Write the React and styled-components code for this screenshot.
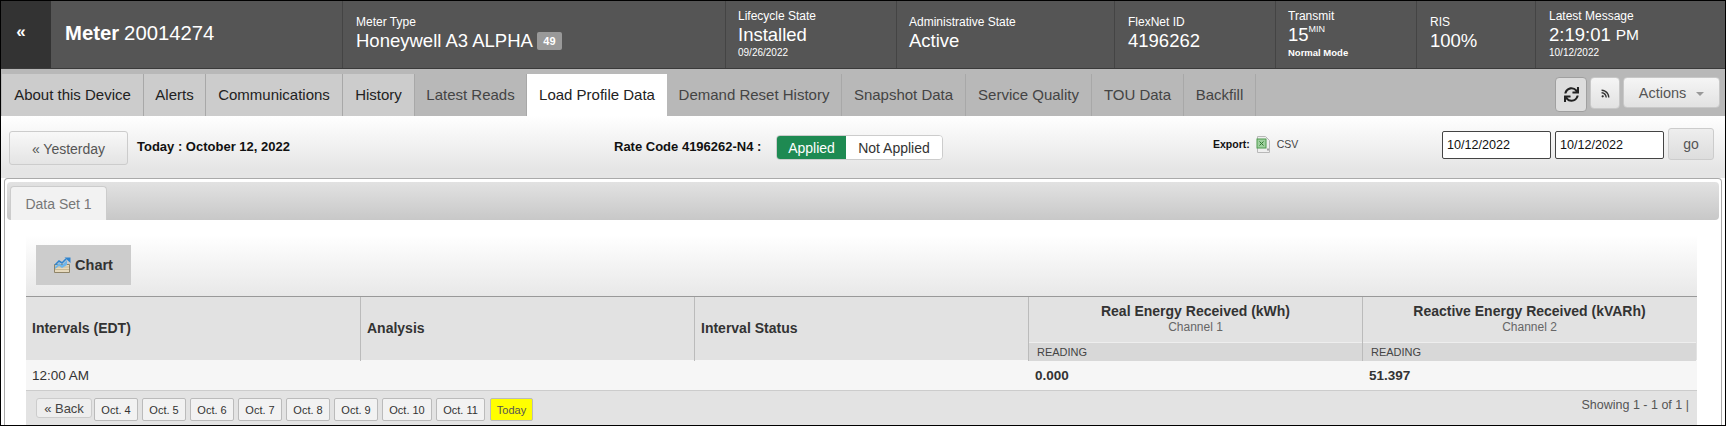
import React from "react";
import styled, { createGlobalStyle } from "styled-components";
import { FaSync, FaRss } from "react-icons/fa";

const GlobalStyle = createGlobalStyle`
  html, body {
    margin: 0;
    padding: 0;
    overflow: hidden;
    background: #fff;
    font-family: "Liberation Sans", Arial, sans-serif;
  }
  * { box-sizing: border-box; }
`;

const Page = styled.div`
  width: 1726px;
  height: 426px;
  border: 1px solid #000;
  overflow: hidden;
  display: flex;
  flex-direction: column;
  background: #fff;
`;

const MeterBar = styled.div`
  height: 68px;
  flex: none;
  display: flex;
  background: #555;
  color: #fff;
  border-bottom: 1px solid #3a3a3a;
`;

const BackCell = styled.div`
  width: 50px;
  background: #333;
  display: flex;
  align-items: center;
  justify-content: center;
  font-weight: bold;
  font-size: 17px;
  padding-bottom: 5px;
  padding-right: 10px;
`;

const TitleCell = styled.div`
  width: 292px;
  display: flex;
  align-items: center;
  padding: 0 0 3px 14px;
  font-size: 20.3px;
  border-right: 1px solid #444;
  b { margin-right: 5px; }
`;

const InfoCell = styled.div`
  width: ${(p) => p.$w}px;
  display: flex;
  flex-direction: column;
  justify-content: center;
  padding: 0 0 ${(p) => (p.$tall ? 2 : 0)}px ${(p) => p.$pad || 12}px;
  border-right: ${(p) => (p.$last ? "none" : "1px solid #444")};
  flex: ${(p) => (p.$last ? 1 : "none")};
`;

const InfoLabel = styled.div`
  font-size: 12px;
  line-height: 13px;
`;

const InfoValue = styled.div`
  font-size: 18.5px;
  line-height: 24px;
  display: flex;
  align-items: center;
  sup { font-size: 9px; line-height: 9px; align-self: flex-start; margin-top: 2px; }
  small { font-size: 15.5px; margin-left: 5px; }
`;

const InfoNote = styled.div`
  font-size: ${(p) => (p.$bold ? 9.5 : 10)}px;
  line-height: 11px;
  font-weight: ${(p) => (p.$bold ? "bold" : "normal")};
`;

const Badge = styled.span`
  background: #999;
  border-radius: 2px;
  font-size: 11px;
  font-weight: bold;
  width: 25px;
  height: 18px;
  margin-left: 4px;
  display: inline-flex;
  align-items: center;
  justify-content: center;
`;

const TabBar = styled.div`
  height: 47px;
  flex: none;
  background: #b8b8b8;
  display: flex;
  align-items: flex-end;
  padding-left: 1px;
`;

const Tab = styled.div`
  width: ${(p) => p.$w}px;
  height: 42px;
  padding-bottom: 1px;
  display: flex;
  align-items: center;
  justify-content: center;
  font-size: 15px;
  border-right: ${(p) => (p.$active ? "none" : "1px solid #a8a8a8")};
  background: ${(p) => (p.$active ? "#fff" : p.$primary ? "#ccc" : "#b8b8b8")};
  color: ${(p) => (p.$active || p.$primary ? "#222" : "#444")};
`;

const TabActions = styled.div`
  margin-left: auto;
  display: flex;
  align-self: flex-start;
  gap: 3px;
  padding: 8px 5px 0 0;
`;

const IconButton = styled.div`
  width: ${(p) => p.$w}px;
  height: ${(p) => p.$h}px;
  display: flex;
  align-items: center;
  justify-content: center;
  gap: 10px;
  border-radius: 4px;
  border: 1px solid ${(p) => (p.$pressed ? "#a0a0a0" : "#c8c8c8")};
  background: ${(p) => (p.$pressed ? "#ddd" : "linear-gradient(#f5f5f5, #e2e2e2)")};
  color: #555;
  font-size: 14.5px;
`;

const Caret = styled.span`
  border-top: 4px solid #999;
  border-left: 4px solid transparent;
  border-right: 4px solid transparent;
  margin-top: 2px;
`;

const ToolRow = styled.div`
  height: 62px;
  flex: none;
  background: linear-gradient(#fff 0, #e5e5e5 54px);
  display: flex;
  padding: 15px 10px 0 8px;
  font-size: 13px;
  color: #111;
`;

const YesterdayButton = styled.div`
  width: 119px;
  height: 34px;
  padding-top: 1px;
  border: 1px solid #ccc;
  border-radius: 3px;
  background: linear-gradient(#f8f8f8, #e4e4e4);
  color: #555;
  font-size: 14px;
  display: flex;
  align-items: center;
  justify-content: center;
`;

const TodayLabel = styled.div`
  width: 477px;
  margin-left: 9px;
  font-weight: bold;
  line-height: 32px;
`;

const RateLabel = styled.div`
  width: 162px;
  font-weight: bold;
  line-height: 32px;
`;

const Toggle = styled.div`
  display: flex;
  height: 25px;
  margin-top: 4px;
  border: 1px solid #ccc;
  border-radius: 4px;
  overflow: hidden;
  font-size: 14px;
`;

const ToggleOption = styled.div`
  width: ${(p) => p.$w}px;
  display: flex;
  align-items: center;
  justify-content: center;
  background: ${(p) => (p.$on ? "#1e8a52" : "#fff")};
  color: ${(p) => (p.$on ? "#fff" : "#333")};
`;

const ExportGroup = styled.div`
  width: 229px;
  margin-left: 270px;
  height: 26px;
  display: flex;
  align-items: center;
  font-size: 10.5px;
  b { margin-right: 6px; }
  span { margin-left: 6px; color: #444; }
`;

const DateInput = styled.div`
  width: 109px;
  height: 28px;
  border: 1px solid #444;
  border-radius: 2px;
  background: #fff;
  font-size: 12.6px;
  line-height: 26px;
  padding-left: 4px;
  margin-right: 4px;
`;

const GoButton = styled.div`
  width: 46px;
  height: 32px;
  margin-top: -3px;
  border: 1px solid #ccc;
  border-radius: 3px;
  background: linear-gradient(#eee, #ddd);
  color: #555;
  font-size: 14px;
  display: flex;
  align-items: center;
  justify-content: center;
`;

const Panel = styled.div`
  flex: 1;
  margin: 0 3px;
  border: 1px solid #aaa;
  border-bottom: none;
  border-radius: 4px 4px 0 0;
  padding: 3px 2px 0;
  background: #fff;
  min-height: 0;
`;

const PanelTabs = styled.div`
  height: 38px;
  border-radius: 4px;
  background: linear-gradient(#e2e2e2, #c8c8c8);
  padding: 4px 0 0 3px;
`;

const PanelTab = styled.div`
  width: 97px;
  height: 34px;
  border: 1px solid #ccc;
  border-bottom: none;
  border-radius: 4px 4px 0 0;
  background: #f2f2f2;
  color: #777;
  font-size: 14px;
  display: flex;
  align-items: center;
  justify-content: center;
`;

const PanelBody = styled.div`
  padding: 15px 22px 0 19px;
`;

const ChartRow = styled.div`
  height: 61px;
  background: linear-gradient(#fff, #e8e8e8);
  padding-top: 10px;
  padding-left: 10px;
`;

const ChartButton = styled.div`
  width: 95px;
  height: 40px;
  background: #ccc;
  color: #333;
  font-weight: bold;
  font-size: 14.5px;
  display: flex;
  align-items: center;
  justify-content: center;
  gap: 4px;
`;

const HeaderRow = styled.div`
  height: 64px;
  border-top: 1px solid #999;
  display: grid;
  grid-template-columns: 335px 334px 334px 334px 333px;
  background: #e2e2e2;
`;

const HeadCell = styled.div`
  display: flex;
  align-items: center;
  padding: 0 6px 2px;
  font-weight: bold;
  font-size: 14px;
  color: #333;
  border-right: 1px solid #bbb;
`;

const GroupCell = styled.div`
  display: flex;
  flex-direction: column;
  border-right: 1px solid #bbb;
  &:last-child { border-right: none; }
`;

const GroupTitle = styled.div`
  height: 45px;
  text-align: center;
  font-size: 14px;
  font-weight: bold;
  color: #333;
  padding-top: 5px;
  line-height: 18px;
  small { display: block; font-weight: normal; font-size: 12px; line-height: 15px; color: #666; }
`;

const GroupSub = styled.div`
  flex: 1;
  background: #d8d8d8;
  border-top: 1px solid #eee;
  font-size: 11px;
  color: #444;
  padding-left: 8px;
  line-height: 18px;
`;

const DataRow = styled.div`
  height: 31px;
  display: grid;
  grid-template-columns: 335px 334px 334px 334px 333px;
  background: #f6f6f6;
  border-bottom: 1px solid #ccc;
  align-items: center;
  font-size: 13.5px;
  color: #333;
`;

const DataCell = styled.div`
  padding-left: 6px;
  font-weight: ${(p) => (p.$bold ? "bold" : "normal")};
`;

const Pager = styled.div`
  height: 34px;
  background: #e3e3e3;
  display: flex;
  align-items: flex-start;
  padding: 7px 8px 0 10px;
  gap: 4px;
`;

const PagerBack = styled.div`
  width: 56px;
  height: 20px;
  margin-right: -2px;
  border: 1px solid #ccc;
  border-radius: 3px;
  background: #eee;
  color: #444;
  font-size: 13px;
  display: flex;
  align-items: center;
  justify-content: center;
`;

const DayButton = styled.div`
  width: ${(p) => p.$w}px;
  height: 23px;
  margin-left: ${(p) => (p.$today ? 1 : 0)}px;
  border: 1px solid #bbb;
  border-radius: 2px;
  background: ${(p) => (p.$today ? "#ff0" : "#f2f2f2")};
  color: ${(p) => (p.$today ? "#555" : "#333")};
  font-size: 11px;
  display: flex;
  align-items: center;
  justify-content: center;
`;

const Showing = styled.div`
  margin-left: auto;
  font-size: 12.5px;
  color: #555;
`;

const CsvIcon = () => (
  <svg width="15" height="17" viewBox="0 0 15 17">
    <path d="M1.5.5h8l4 4v12h-12z" fill="#efefef" stroke="#b8b8b8" />
    <rect x="1" y="3" width="9" height="9" fill="#9fd09f" stroke="#4f9a4f" />
    <path d="M3.5 5.5l4 4M7.5 5.5l-4 4" stroke="#2f7a2f" />
    <path d="M12 12.5v2" stroke="#555" />
  </svg>
);

const ChartIcon = () => (
  <svg width="17" height="16" viewBox="0 0 17 16">
    <path d="M.5 7.5h15v8H.5z" fill="#e6d9bd" stroke="#8f8468" />
    <path d="M1 12.5h14M1 10h14" stroke="#c9b994" />
    <path d="M1 10l4-4 3 2 5-5v5l-5 3-3-2-4 3z" fill="#6db5ea" />
    <path d="M1 8l4-4 3 2 4-4" fill="none" stroke="#2e84cf" strokeWidth="1.6" />
    <path d="M10.500 .5h6v5.500z" fill="#2e84cf" />
  </svg>
);

const mainTabs = [
  ["About this Device", 142, true],
  ["Alerts", 62, true],
  ["Communications", 137, true],
  ["History", 72, true],
  ["Latest Reads", 112],
  ["Load Profile Data", 140, false, true],
  ["Demand Reset History", 175],
  ["Snapshot Data", 124],
  ["Service Quality", 126],
  ["TOU Data", 92],
  ["Backfill", 72],
];

const days = [
  ["Oct. 4", 44],
  ["Oct. 5", 44],
  ["Oct. 6", 44],
  ["Oct. 7", 44],
  ["Oct. 8", 44],
  ["Oct. 9", 44],
  ["Oct. 10", 50],
  ["Oct. 11", 49],
];

const App = () => (
  <Page>
    <GlobalStyle />
    <MeterBar>
      <BackCell>«</BackCell>
      <TitleCell>
        <b>Meter</b> 20014274
      </TitleCell>
      <InfoCell $w={383} $pad={13}>
        <InfoLabel>Meter Type</InfoLabel>
        <InfoValue>
          Honeywell A3 ALPHA<Badge>49</Badge>
        </InfoValue>
      </InfoCell>
      <InfoCell $w={171} $pad={12} $tall>
        <InfoLabel>Lifecycle State</InfoLabel>
        <InfoValue>Installed</InfoValue>
        <InfoNote>09/26/2022</InfoNote>
      </InfoCell>
      <InfoCell $w={218} $pad={12}>
        <InfoLabel>Administrative State</InfoLabel>
        <InfoValue>Active</InfoValue>
      </InfoCell>
      <InfoCell $w={161} $pad={13}>
        <InfoLabel>FlexNet ID</InfoLabel>
        <InfoValue>4196262</InfoValue>
      </InfoCell>
      <InfoCell $w={141} $pad={12} $tall>
        <InfoLabel>Transmit</InfoLabel>
        <InfoValue>
          15<sup>MIN</sup>
        </InfoValue>
        <InfoNote $bold>Normal Mode</InfoNote>
      </InfoCell>
      <InfoCell $w={119} $pad={13}>
        <InfoLabel>RIS</InfoLabel>
        <InfoValue>100%</InfoValue>
      </InfoCell>
      <InfoCell $last $pad={13} $tall>
        <InfoLabel>Latest Message</InfoLabel>
        <InfoValue>
          2:19:01<small>PM</small>
        </InfoValue>
        <InfoNote>10/12/2022</InfoNote>
      </InfoCell>
    </MeterBar>

    <TabBar>
      {mainTabs.map(([label, w, primary, active]) => (
        <Tab key={label} $w={w} $primary={primary} $active={active}>
          {label}
        </Tab>
      ))}
      <TabActions>
        <IconButton $w={32} $h={35} $pressed>
          <FaSync size={15} color="#222" />
        </IconButton>
        <IconButton $w={30} $h={32}>
          <FaRss size={9} color="#333" />
        </IconButton>
        <IconButton $w={97} $h={31}>
          Actions <Caret />
        </IconButton>
      </TabActions>
    </TabBar>

    <ToolRow>
      <YesterdayButton>« Yesterday</YesterdayButton>
      <TodayLabel>Today : October 12, 2022</TodayLabel>
      <RateLabel>Rate Code 4196262-N4 :</RateLabel>
      <Toggle>
        <ToggleOption $on $w={69}>Applied</ToggleOption>
        <ToggleOption $w={96}>Not Applied</ToggleOption>
      </Toggle>
      <ExportGroup>
        <b>Export:</b> <CsvIcon /> <span>CSV</span>
      </ExportGroup>
      <DateInput>10/12/2022</DateInput>
      <DateInput>10/12/2022</DateInput>
      <GoButton>go</GoButton>
    </ToolRow>

    <Panel>
      <PanelTabs>
        <PanelTab>Data Set 1</PanelTab>
      </PanelTabs>
      <PanelBody>
        <ChartRow>
          <ChartButton>
            <ChartIcon /> Chart
          </ChartButton>
        </ChartRow>
        <HeaderRow>
          <HeadCell>Intervals (EDT)</HeadCell>
          <HeadCell>Analysis</HeadCell>
          <HeadCell>Interval Status</HeadCell>
          <GroupCell>
            <GroupTitle>
              Real Energy Received (kWh)<small>Channel 1</small>
            </GroupTitle>
            <GroupSub>READING</GroupSub>
          </GroupCell>
          <GroupCell>
            <GroupTitle>
              Reactive Energy Received (kVARh)<small>Channel 2</small>
            </GroupTitle>
            <GroupSub>READING</GroupSub>
          </GroupCell>
        </HeaderRow>
        <DataRow>
          <DataCell>12:00 AM</DataCell>
          <DataCell />
          <DataCell />
          <DataCell $bold>0.000</DataCell>
          <DataCell $bold>51.397</DataCell>
        </DataRow>
        <Pager>
          <PagerBack>« Back</PagerBack>
          {days.map(([label, w]) => (
            <DayButton key={label} $w={w}>{label}</DayButton>
          ))}
          <DayButton $w={43} $today>Today</DayButton>
          <Showing>Showing 1 - 1 of 1 |</Showing>
        </Pager>
      </PanelBody>
    </Panel>
  </Page>
);

export default App;
